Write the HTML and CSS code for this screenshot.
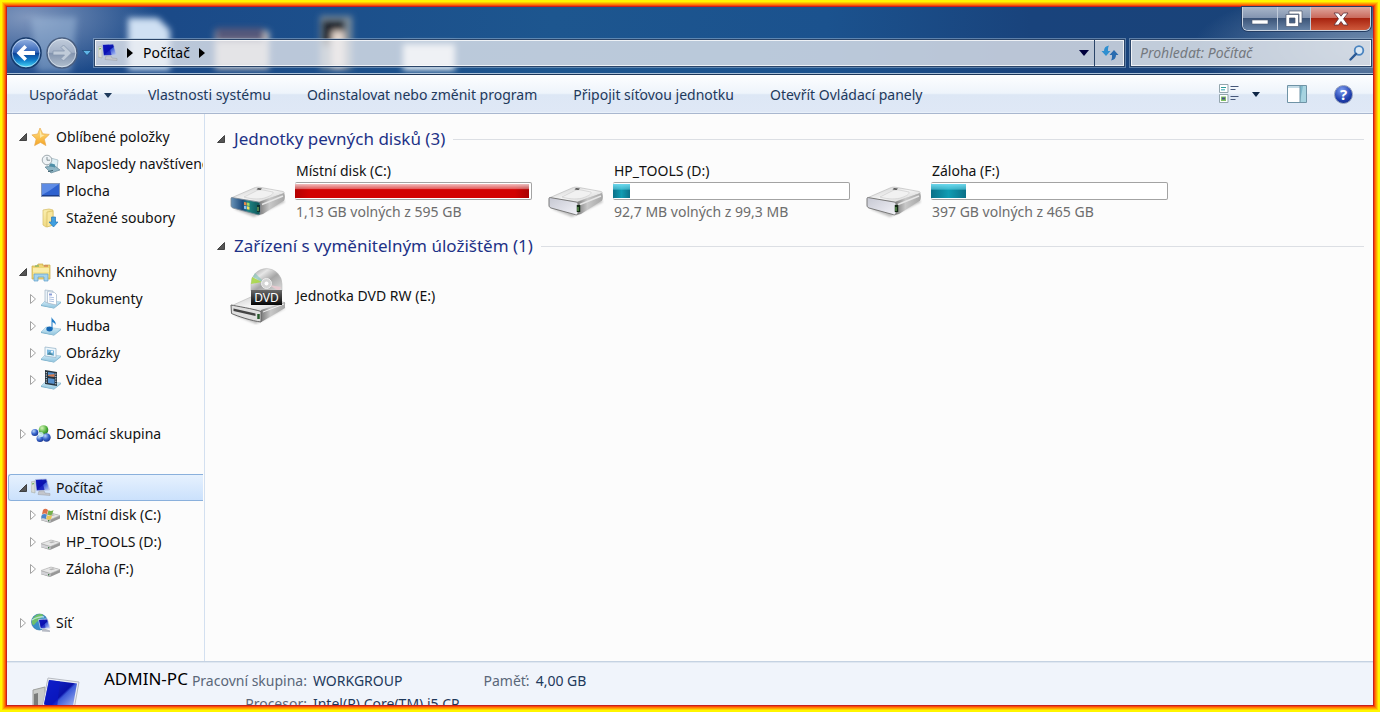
FILE: index.html
```html
<!DOCTYPE html>
<html lang="cs">
<head>
<meta charset="utf-8">
<title>Počítač</title>
<link rel="stylesheet" href="styles.css">
</head>
<body>
<svg class="defs" aria-hidden="true">
  <defs>
    <linearGradient id="gScreen" x1="0" y1="0" x2="1" y2="1"><stop offset="0" stop-color="#1a2fd0"/><stop offset=".5" stop-color="#0a12a8"/><stop offset=".55" stop-color="#3c5ad8"/><stop offset="1" stop-color="#c4d4f8"/></linearGradient>
    <linearGradient id="gBase" x1="0" y1="0" x2="0" y2="1"><stop offset="0" stop-color="#d8effa"/><stop offset="1" stop-color="#8fc4de"/></linearGradient>
    <linearGradient id="gTop" x1="0" y1="0" x2="1" y2="1"><stop offset="0" stop-color="#c9c9c9"/><stop offset=".5" stop-color="#f4f4f4"/><stop offset="1" stop-color="#cfcfcf"/></linearGradient>
    <linearGradient id="gSide" x1="0" y1="0" x2="1" y2="0"><stop offset="0" stop-color="#7a7a7a"/><stop offset=".4" stop-color="#c8c8c8"/><stop offset="1" stop-color="#a6a6a6"/></linearGradient>
    <linearGradient id="gFront" x1="0" y1="0" x2="1" y2="1"><stop offset="0" stop-color="#c6c8d2"/><stop offset="1" stop-color="#f2f2f8"/></linearGradient>
    <linearGradient id="gFrontC" x1="0" y1="0" x2="1" y2="0"><stop offset="0" stop-color="#6a94b8"/><stop offset=".4" stop-color="#1c4a7c"/><stop offset=".6" stop-color="#1f8484"/><stop offset="1" stop-color="#0b5356"/></linearGradient>
    <linearGradient id="gStar" x1="0" y1="0" x2="0" y2="1"><stop offset="0" stop-color="#ffe58a"/><stop offset="1" stop-color="#f5a423"/></linearGradient>
    <linearGradient id="gFolder" x1="0" y1="0" x2="1" y2="1"><stop offset="0" stop-color="#fdf3b8"/><stop offset="1" stop-color="#e6c860"/></linearGradient>
    <linearGradient id="gDisc" x1="0" y1="0" x2="1" y2="1"><stop offset="0" stop-color="#8f8f8f"/><stop offset=".3" stop-color="#e6e6e6"/><stop offset=".55" stop-color="#a6a6a6"/><stop offset="1" stop-color="#dedede"/></linearGradient>
    <linearGradient id="gTag" x1="0" y1="0" x2="0" y2="1"><stop offset="0" stop-color="#6a6a6a"/><stop offset="1" stop-color="#050505"/></linearGradient>
    <linearGradient id="gBack" x1="0" y1="0" x2="0" y2="1"><stop offset="0" stop-color="#9db8e4"/><stop offset=".48" stop-color="#2f62b8"/><stop offset=".5" stop-color="#0c3f96"/><stop offset=".75" stop-color="#1180cc"/><stop offset="1" stop-color="#4fe0fa"/></linearGradient>
    <linearGradient id="gFwd" x1="0" y1="0" x2="0" y2="1"><stop offset="0" stop-color="#c3cedd"/><stop offset=".48" stop-color="#a2b0c6"/><stop offset=".5" stop-color="#8293ae"/><stop offset="1" stop-color="#b4c2d0"/></linearGradient>
    <radialGradient id="gBall" cx=".35" cy=".3" r=".8"><stop offset="0" stop-color="#b9d4fa"/><stop offset=".5" stop-color="#3a68cc"/><stop offset="1" stop-color="#122c86"/></radialGradient>
    <radialGradient id="gGreen" cx=".35" cy=".3" r=".8"><stop offset="0" stop-color="#d6f6b8"/><stop offset=".6" stop-color="#4fae3a"/><stop offset="1" stop-color="#1f6d22"/></radialGradient>
    <filter id="soft" x="-30%" y="-30%" width="160%" height="160%"><feGaussianBlur stdDeviation="1.2"/></filter>
    <filter id="glass" x="-30%" y="-30%" width="160%" height="160%"><feGaussianBlur stdDeviation="3"/></filter>

    <symbol id="open" viewBox="0 0 10 10"><path d="M8.500 1.500v7h-7z" fill="#555" stroke="#2a2a2a" stroke-width=".8"/></symbol>
    <symbol id="closed" viewBox="0 0 10 10"><path d="M2.500.500v9l5-4.500z" fill="#fff" stroke="#a2a2a2"/></symbol>

    <symbol id="star" viewBox="0 0 20 20"><path d="M9 1l2.800 5.800 6.500.6-5 4.800 1.600 6.400-5.400-3.200-5.900 3.200 1.600-6.600L.900 7.900l5.800-.9z" fill="url(#gStar)" stroke="#e8a94f" stroke-width=".7"/><path d="M9 3l1.600 4.800 3 .3-4.600 3z" fill="#fff5c4" opacity=".7"/></symbol>
    <symbol id="recent" viewBox="0 0 20 20"><path d="M6 3l11 3-1 9-10-2z" fill="#dff0f6" stroke="#9bb2bc" stroke-width=".7"/><path d="M4 13l10-1 5 4-9 3z" fill="#8fb6c6" stroke="#54788a" stroke-width=".6"/><path d="M9 9l5 1.500v3L8 12z" fill="#4e8fa8"/><circle cx="6" cy="6" r="4.800" fill="#eef3f6" stroke="#a0aab0"/><path d="M6 3v3.200h3" fill="none" stroke="#6b7880" stroke-width=".8"/><path d="M7 17.500l5-1" stroke="#385a68"/></symbol>
    <symbol id="desktop" viewBox="0 0 20 20"><rect x=".500" y="2.500" width="18" height="13" fill="#2e62cf" stroke="#8698b8"/><path d="M1 3h17L8 10l-7 4z" fill="#6f9bec" opacity=".75"/><path d="M1 14.500h17" stroke="#1b3d8c"/></symbol>
    <symbol id="downloads" viewBox="0 0 20 20"><path d="M2 2l6-1 4 1v15l-7 2-3-2z" fill="url(#gFolder)" stroke="#d6bb62" stroke-width=".7"/><path d="M6 4l6-1v14l-6 2z" fill="#f8e69c" stroke="#d6bb62" stroke-width=".7"/><path d="M10.500 9h4v5h2.500l-4.500 5-4.500-5h2.500z" fill="#3f9fe0" stroke="#2a76b8" stroke-width=".7"/></symbol>
    <symbol id="libraries" viewBox="0 0 20 20"><path d="M1 4h5l1-2h5v2l2-1h5v14H1z" fill="#efd676" stroke="#c9ab49" stroke-width=".7"/><path d="M2 6h16v9H2z" fill="#f6e48f"/><path d="M2 7h16M2 9h16" stroke="#fdf5c4"/><path d="M4 4h4" stroke="#69a85a"/><path d="M13 4h4" stroke="#c8604a"/><path d="M3 19v-7h14v7h-4v-4H7v4z" fill="#a5d3ec" stroke="#5f9fca" stroke-width=".7"/></symbol>
    <symbol id="base" viewBox="0 0 20 20"><path d="M5 11l-5 5 13 3 7-6z" fill="url(#gBase)" stroke="#98c2d6" stroke-width=".6"/><path d="M0 16l13 3 7-6v1l-7 5.500L0 17z" fill="#74aecb"/></symbol>
    <symbol id="documents" viewBox="0 0 20 20"><use href="#base"/><path d="M4 1l8 1v13l-8-2z" fill="#e9f1f8" stroke="#a2b4c6" stroke-width=".7"/><path d="M6.500 2.500l7 1 2 2V16l-9-2z" fill="#fff" stroke="#a2b4c6" stroke-width=".7"/><path d="M8 8l5 .7M8 10l5 .7M8 12l5 .7" stroke="#9db4da" stroke-width=".8"/><path d="M8 4.500h3v2H8z" fill="#8b9dd6"/></symbol>
    <symbol id="music" viewBox="0 0 20 20"><use href="#base"/><ellipse cx="8.500" cy="13" rx="3.200" ry="2.400" fill="#1768b4"/><path d="M10.500 13V1c1 3 5 4 4 8-.5-2-2-2.500-3-3v7z" fill="#1f7cc8"/></symbol>
    <symbol id="pictures" viewBox="0 0 20 20"><use href="#base"/><path d="M4 4l11 1.500v9L4 13z" fill="#eef7fc" stroke="#9bb8cb" stroke-width=".8"/><path d="M6 6.500l7 1v5l-7-1z" fill="#7ab8e0"/><path d="M6 11.500l2.500-2.500 4.500 3.500z" fill="#4f8aa0"/><circle cx="11" cy="8.800" r="1" fill="#fff"/></symbol>
    <symbol id="videos" viewBox="0 0 20 20"><use href="#base"/><path d="M4 0l12 2v14L4 14z" fill="#27343f"/><path d="M7 2l6.500 1v4L7 6zM7 8l6.500 1v5L7 13z" fill="#5690cc"/><path d="M7 5l6.500-1v3L7 6z" fill="#d4794b"/><path d="M5.300 2v11M14.800 3.500v11" stroke="#dbe4ea" stroke-dasharray="1.200 1.200"/></symbol>
    <symbol id="homegroup" viewBox="0 0 20 20"><circle cx="12.500" cy="6" r="4.800" fill="url(#gGreen)"/><circle cx="3.800" cy="8.500" r="3.500" fill="url(#gBall)"/><circle cx="9" cy="14.500" r="3.500" fill="url(#gBall)"/><circle cx="15.500" cy="13.500" r="4.200" fill="url(#gBall)"/><circle cx="10" cy="10.500" r="2.600" fill="#c9eef4" opacity=".85"/></symbol>
    <symbol id="computer" viewBox="0 0 20 20"><path d="M0 4l4-1v12l-4-1z" fill="#d8dbd8" stroke="#a8aca8" stroke-width=".6"/><path d="M1 6l2-.4" stroke="#5fae4c"/><path d="M4.500 1.500l11-.5 3 11-13 .500z" fill="url(#gScreen)" stroke="#b9c4e0" stroke-width=".8"/><path d="M5 2l6-.3L13.500 12l-7.500.2z" fill="#0b0fb6" opacity=".75"/><path d="M8 13l5-.2 1 2.200 5 .5v2l-12-1z" fill="#c3c6cc" stroke="#9a9ea6" stroke-width=".5"/></symbol>
    <symbol id="drive" viewBox="0 0 20 20"><path d="M0 12l10-4 9 2.500v3L9 18 0 15.200z" fill="#979797"/><path d="M0 11.500L10 8l9 2.500L9.500 14.500z" fill="#e6e6e6" stroke="#b0b0b0" stroke-width=".6"/><path d="M0 12l9.500 3v2.500L0 15z" fill="#d2d2d6"/><path d="M7.700 15v1.600" stroke="#2e6a35" stroke-width="1.200"/><path d="M8 10l4-.8 2 1-4 1z" fill="#b4b4b4"/></symbol>
    <symbol id="drivewin" viewBox="0 0 20 20"><use href="#drive"/><path d="M2 5c2-2 3.500-1 5 0L6 9.200C5 8.300 3 8 1 9.200z" fill="#dd7048"/><path d="M7.500 5.300c2 1 3.500.8 5-.3l-1.300 4.500C9.500 10.500 8 10.300 6.300 9.500z" fill="#74b04c"/><path d="M.800 9.800c2-1.300 3.800-.8 5 0L4.800 14c-1.300-.8-2.800-1-4.500-.3z" fill="#4a86cf"/><path d="M6.200 10.200c1.500.8 3.300 1 4.900 0l-1 3.800c-1.800 1-3.500.8-4.900 0z" fill="#e8c65a"/></symbol>
    <symbol id="network" viewBox="0 0 20 20"><circle cx="8.500" cy="9" r="8" fill="#3b8fc8" stroke="#2c6fa2" stroke-width=".6"/><path d="M3 4c4-4 8-3 9-2 0 3-4 3-5 6-2 1-4 5-5 4-2-3-1-6 1-8z" fill="#6fc069"/><path d="M1 7c3-2 9-4 12-3" stroke="#d3f0fa" fill="none" stroke-width="1.500" opacity=".7"/><path d="M7.500 6.500l9-.5 2.500 9-9.500.500z" fill="url(#gScreen)" stroke="#ccd6ee" stroke-width=".8"/><path d="M8 7l5-.3 1.500 8-4.500.3z" fill="#0b0fb6" opacity=".6"/><path d="M11 16l3-.2 5 1.700v1.500l-8-.5z" fill="#b6bac4"/></symbol>

    <symbol id="hdd" viewBox="0 0 56 34"><path d="M4 24l20 8 31-15-3-4z" fill="#777" opacity=".45" filter="url(#soft)"/><path d="M1 13L24 3c2-1 4-1 6-.7L53 6.500c1.500.5 1.500 1.500.500 2.300L29 17z" fill="url(#gTop)" stroke="#b5b5b5" stroke-width=".6"/><path d="M14 12l13-6.500c2-.8 4-.8 6-.5l10 2c1 2-3 4-7 5.500-5 2-14 2-22-.500z" fill="#f1f1f1" stroke="#cfcfcf" stroke-width=".7"/><path d="M28 3l4 .5-1.500 1.500-4-.5z" fill="#555"/><path d="M29 17L54 8c1 1 1.300 6 0 7.500L33 29l-4 1z" fill="url(#gSide)"/><path d="M32 19.500L53 11" stroke="#e6e6e6" stroke-width="1.500"/></symbol>
    <symbol id="dvd" viewBox="0 0 56 58"><path d="M4 48l22 9 30-16z" fill="#777" opacity=".45" filter="url(#soft)"/><path d="M1 39l22-10h14l17 6.500c1 .5 1 1.500 0 2L31 44z" fill="url(#gTop)" stroke="#b5b5b5" stroke-width=".6"/><path d="M31 43l24-8v6L33 54l-2 1z" fill="url(#gSide)"/><path d="M33 45l21-8" stroke="#f0f0f0"/><path d="M21 24V17a15.500 15.500 0 0 1 31 0v7z" fill="url(#gDisc)" stroke="#bcbcbc" stroke-width=".6"/><path d="M22 10l10 5-11 2z" fill="#a6d83e" opacity=".85"/><path d="M25 6l8 8-1 1-9-5z" fill="#7fc3b6" opacity=".6"/><path d="M39 18l12 2-2 4z" fill="#e6c9cf"/><circle cx="36.500" cy="16.500" r="5" fill="#d5d5d5" stroke="#eee"/><circle cx="36.500" cy="16.500" r="2" fill="#fff"/><path d="M21 23h31v15H21z" fill="url(#gTag)"/><text x="36.500" y="34.500" text-anchor="middle" class="dvd-label">DVD</text><path d="M1 38c5 1 23 4 30 6.500V55C22 54 7 49 1.500 46.500z" fill="#dfdfdf" stroke="#666" stroke-width="1"/><path d="M3.500 41.500l22 5v2.500l-22-5z" fill="#444"/><path d="M28.500 47v5" stroke="#285a2c" stroke-width="2.500"/></symbol>
  </defs>
</svg>

<div class="frame">
  <header class="titlebar">
    <svg class="backdrop" viewBox="0 0 480 67" aria-hidden="true">
      <g filter="url(#glass)">
        <path d="M24 10h46l-6 55H30z" fill="#a9c4e0" opacity=".45"/>
        <path d="M121 11h30l12 12v40h-42z" fill="#cfe0f3"/>
        <path d="M208 24h54v38h-54z" fill="#c9c4c4"/><path d="M209 21h48v14h-48z" fill="#56587a"/>
        <path d="M313 9h32v53h-32z" fill="#7f8f9c"/><path d="M315 13h23v26h-23z" fill="#151c26"/>
        <path d="M325 24h12v38h-12z" fill="#e5d7cd"/>
        <path d="M396 37h52v26h-52z" fill="#f6fafd"/>
      </g>
    </svg>
    <div class="controls">
      <button class="control" aria-label="Minimalizovat"><svg width="18" height="14" viewBox="0 0 18 14"><path d="M1 8h16v4H1z" fill="#fff" stroke="#4a586e" stroke-width=".6"/></svg></button>
      <button class="control" aria-label="Obnovit"><svg width="18" height="18" viewBox="0 0 18 18"><path d="M4 1h13v12h-3V4H4z" fill="#fff" stroke="#4a586e" stroke-width=".7"/><path d="M1 4.500h12.500v12H1zM4.500 8v5H10V8z" fill="#fff" fill-rule="evenodd" stroke="#4a586e" stroke-width=".7"/></svg></button>
      <button class="control control-close" aria-label="Zavřít"><svg width="16" height="14" viewBox="0 0 16 14"><path d="M1 1h4.500L8 4.200 10.500 1H15l-4.500 5.800L15 13h-4.500L8 9.500 5.500 13H1l4.500-6.200z" fill="#fff" stroke="#5c3038" stroke-width=".8"/></svg></button>
    </div>
    <div class="navrow">
      <div class="travel">
        <button class="round" aria-label="Zpět"><svg width="32" height="32" viewBox="0 0 32 32"><circle cx="16" cy="16" r="15" fill="url(#gBack)" stroke="#173a6b" stroke-width="1.500"/><circle cx="16" cy="16" r="13.800" fill="none" stroke="#dcecfb" stroke-opacity=".65"/><path d="M6.500 16l8-8 2.500 2.500-3.500 3.500H25v4H13.500l3.500 3.500-2.500 2.500z" fill="#fff"/></svg></button>
        <button class="round" aria-label="Vpřed"><svg width="32" height="32" viewBox="0 0 32 32"><circle cx="16" cy="16" r="15" fill="url(#gFwd)" stroke="#4a5f80" stroke-width="1.500"/><circle cx="16" cy="16" r="13.800" fill="none" stroke="#e3ebf3" stroke-opacity=".7"/><path d="M25.500 16l-8-8-2.500 2.500 3.500 3.500H7v4h11.500L15 21.500l2.500 2.500z" fill="#c0cbd9" stroke="#8797ae" stroke-width=".8"/></svg></button>
        <button class="history" aria-label="Poslední stránky"><svg width="10" height="6" viewBox="0 0 10 6"><path d="M.500.500h9L5 5.500z" fill="#5fb4e6" stroke="#123a66" stroke-width=".6"/></svg></button>
      </div>
      <nav class="address" aria-label="Adresa">
        <svg class="icon" aria-hidden="true"><use href="#computer"/></svg>
        <button class="crumb-arrow" aria-label="Kořen"><svg width="6" height="10" viewBox="0 0 6 10"><path d="M0 0l6 5-6 5z"/></svg></button>
        <a class="crumb" href="#">Počítač</a>
        <button class="crumb-arrow" aria-label="Podsložky"><svg width="6" height="10" viewBox="0 0 6 10"><path d="M0 0l6 5-6 5z"/></svg></button>
        <button class="address-drop" aria-label="Předchozí umístění"><svg width="10" height="6" viewBox="0 0 10 6"><path d="M0 0h10L5 6z" fill="#00003c"/></svg></button>
        <button class="refresh" aria-label="Aktualizovat"><svg width="18" height="16" viewBox="0 0 18 16"><path d="M8 .500C4.500 1 3 3 3 6H.500L5 11l4.500-5H7c0-2.500 0-4 1-5.500z" fill="#2f8fd0"/><path d="M10 15.500c3.500-.5 5-2.500 5-5.500h2.500L13 5l-4.500 5H11c0 2.500 0 4-1 5.500z" fill="#2a6cb0"/></svg></button>
      </nav>
      <label class="search">
        <input type="search" placeholder="Prohledat: Počítač" aria-label="Prohledat: Počítač">
        <svg width="16" height="16" viewBox="0 0 16 16" aria-hidden="true"><circle cx="10" cy="5.500" r="4.300" fill="#dbe8f4" stroke="#4a84c0" stroke-width="1.800"/><path d="M7 8.800L1.500 14.500" stroke="#2b5a96" stroke-width="2.400" stroke-linecap="round"/></svg>
      </label>
    </div>
  </header>

  <div class="toolbar" role="toolbar">
    <button class="command">Uspořádat <svg width="8" height="5" viewBox="0 0 8 5"><path d="M0 0h8L4 5z" fill="#1e395b"/></svg></button>
    <button class="command">Vlastnosti systému</button>
    <button class="command">Odinstalovat nebo změnit program</button>
    <button class="command">Připojit síťovou jednotku</button>
    <button class="command">Otevřít Ovládací panely</button>
    <div class="toolbar-end">
      <button class="tool view" aria-label="Změnit zobrazení"><svg width="20" height="20" viewBox="0 0 20 20"><path d="M.500.500h8.500v8H.500zM.500 10.500h8.500v8H.500z" fill="#fff" stroke="#93a5ad"/><path d="M2 3h5v1H2z" fill="#2f9c9a"/><path d="M2 5h4v1.500H2z" fill="#74bfc8"/><path d="M2 12.500h5V17H2z" fill="#7fbf63"/><path d="M3 13.500h3v2H3z" fill="#4a4e8c"/><path d="M11.500 2.500h8M11.500 5.500h5M11.500 12.500h8M11.500 15.500h5" stroke="#46587a"/></svg><svg width="8" height="5" viewBox="0 0 8 5"><path d="M0 0h8L4 5z" fill="#0e2646"/></svg></button>
      <button class="tool" aria-label="Podokno náhledu"><svg width="20" height="18" viewBox="0 0 20 18"><path d="M.500.500h19v17H.500z" fill="#fff" stroke="#6f93a6"/><path d="M1 1h12v2H1z" fill="#c3dbe6"/><path d="M13 1h6v16h-6z" fill="#7db8cc"/><path d="M16 1h3v16h-6z" fill="#a6d3e0"/><path d="M13 1v16" stroke="#6f93a6"/></svg></button>
      <button class="tool help" aria-label="Nápověda"><span>?</span></button>
    </div>
  </div>

  <div class="body">
    <nav class="tree" aria-label="Navigační podokno">
      <ul>
        <li><a class="node" href="#"><svg class="twist"><use href="#open"/></svg><svg class="icon"><use href="#star"/></svg>Oblíbené položky</a>
          <ul>
            <li><a class="node" href="#"><i class="twist"></i><svg class="icon"><use href="#recent"/></svg>Naposledy navštívené</a></li>
            <li><a class="node" href="#"><i class="twist"></i><svg class="icon"><use href="#desktop"/></svg>Plocha</a></li>
            <li><a class="node" href="#"><i class="twist"></i><svg class="icon"><use href="#downloads"/></svg>Stažené soubory</a></li>
          </ul>
        </li>
        <li><a class="node" href="#"><svg class="twist"><use href="#open"/></svg><svg class="icon"><use href="#libraries"/></svg>Knihovny</a>
          <ul>
            <li><a class="node" href="#"><svg class="twist"><use href="#closed"/></svg><svg class="icon"><use href="#documents"/></svg>Dokumenty</a></li>
            <li><a class="node" href="#"><svg class="twist"><use href="#closed"/></svg><svg class="icon"><use href="#music"/></svg>Hudba</a></li>
            <li><a class="node" href="#"><svg class="twist"><use href="#closed"/></svg><svg class="icon"><use href="#pictures"/></svg>Obrázky</a></li>
            <li><a class="node" href="#"><svg class="twist"><use href="#closed"/></svg><svg class="icon"><use href="#videos"/></svg>Videa</a></li>
          </ul>
        </li>
        <li><a class="node" href="#"><svg class="twist"><use href="#closed"/></svg><svg class="icon"><use href="#homegroup"/></svg>Domácí skupina</a></li>
        <li><a class="node selected" href="#" aria-current="true"><svg class="twist"><use href="#open"/></svg><svg class="icon"><use href="#computer"/></svg>Počítač</a>
          <ul>
            <li><a class="node" href="#"><svg class="twist"><use href="#closed"/></svg><svg class="icon"><use href="#drivewin"/></svg>Místní disk (C:)</a></li>
            <li><a class="node" href="#"><svg class="twist"><use href="#closed"/></svg><svg class="icon"><use href="#drive"/></svg>HP_TOOLS (D:)</a></li>
            <li><a class="node" href="#"><svg class="twist"><use href="#closed"/></svg><svg class="icon"><use href="#drive"/></svg>Záloha (F:)</a></li>
          </ul>
        </li>
        <li><a class="node" href="#"><svg class="twist"><use href="#closed"/></svg><svg class="icon"><use href="#network"/></svg>Síť</a></li>
      </ul>
    </nav>

    <main class="content">
      <section>
        <h2 class="group"><svg class="twist"><use href="#open"/></svg>Jednotky pevných disků (3)</h2>
        <div class="tiles">
          <a class="tile" href="#">
            <svg class="drive-icon" viewBox="0 0 56 34"><use href="#hdd"/><path d="M1 13.500c0-1 1-1 2-.8L28 17c1.500.3 2 1 2 2v9c0 2-1 2-2.500 1.700L3 23c-1.500-.5-2-1.500-2-3z" fill="url(#gFrontC)" stroke="#7b8894" stroke-width=".8"/><path d="M14 17l2.500.5v3L14 20z" fill="#e88a4a"/><path d="M17 17.600l2.500.5v3l-2.500-.5z" fill="#a8d860"/><path d="M14 20.700l2.500.5v3l-2.500-.5z" fill="#8cc0f0"/><path d="M17 21.300l2.500.5v3l-2.500-.5z" fill="#f2e060"/><path d="M28.500 20v7" stroke="#133" stroke-width="3"/><path d="M28 22v4" stroke="#8fd06a"/></svg>
            <span class="info"><span class="name">Místní disk (C:)</span><span class="bar" role="meter" aria-label="Obsazeno" aria-valuenow="99"><span class="fill full" style="width:99%"></span></span><span class="free">1,13 GB volných z 595 GB</span></span>
          </a>
          <a class="tile" href="#">
            <svg class="drive-icon" viewBox="0 0 56 34"><use href="#hdd"/><path d="M1 13.500c0-1 1-1 2-.8L28 17c1.500.3 2 1 2 2v9c0 2-1 2-2.500 1.700L3 23c-1.500-.5-2-1.500-2-3z" fill="url(#gFront)" stroke="#7a7a7a"/><path d="M30.500 20v7" stroke="#122814" stroke-width="3.500"/><path d="M30 22v4" stroke="#7ec46a"/></svg>
            <span class="info"><span class="name">HP_TOOLS (D:)</span><span class="bar" role="meter" aria-label="Obsazeno" aria-valuenow="7"><span class="fill" style="width:7%"></span></span><span class="free">92,7 MB volných z 99,3 MB</span></span>
          </a>
          <a class="tile" href="#">
            <svg class="drive-icon" viewBox="0 0 56 34"><use href="#hdd"/><path d="M1 13.500c0-1 1-1 2-.8L28 17c1.500.3 2 1 2 2v9c0 2-1 2-2.500 1.700L3 23c-1.500-.5-2-1.500-2-3z" fill="url(#gFront)" stroke="#7a7a7a"/><path d="M30.500 20v7" stroke="#122814" stroke-width="3.500"/><path d="M30 22v4" stroke="#7ec46a"/></svg>
            <span class="info"><span class="name">Záloha (F:)</span><span class="bar" role="meter" aria-label="Obsazeno" aria-valuenow="15"><span class="fill" style="width:15%"></span></span><span class="free">397 GB volných z 465 GB</span></span>
          </a>
        </div>
      </section>
      <section>
        <h2 class="group"><svg class="twist"><use href="#open"/></svg>Zařízení s vyměnitelným úložištěm (1)</h2>
        <div class="tiles">
          <a class="tile tile-plain" href="#">
            <svg class="dvd-icon"><use href="#dvd"/></svg>
            <span class="name">Jednotka DVD RW (E:)</span>
          </a>
        </div>
      </section>
    </main>
  </div>

  <footer class="details">
    <svg class="pc" viewBox="0 0 54 48" aria-hidden="true"><path d="M4 13l12-3v37H4z" fill="#c9cbc8" stroke="#9fa19e"/><path d="M5 17l4-1v30H5z" fill="#7a7c7a"/><path d="M19 1l31 4-6 33-31-8z" fill="#eceef2" stroke="#b8bcc4"/><path d="M20 3l28 3.500-5 28-28-7z" fill="url(#gScreen)"/><path d="M20 3l11 1.500L28 31l-13-4z" fill="#0a18c8" opacity=".7"/></svg>
    <div class="pcname">ADMIN-PC</div>
    <dl class="facts">
      <dt>Pracovní skupina:</dt><dd>WORKGROUP</dd>
      <dt>Procesor:</dt><dd>Intel(R) Core(TM) i5 CP</dd>
    </dl>
    <dl class="facts memory">
      <dt>Paměť:</dt><dd>4,00 GB</dd>
    </dl>
  </footer>
</div>
</body>
</html>
```
FILE: styles.css
```css
* { box-sizing: border-box; }
body {
  margin: 0;
  font: 14px/20px "Noto Sans", "Open Sans", sans-serif;
  color: #111;
}
button { margin: 0; padding: 0; border: 0; background: none; font: inherit; color: inherit; }
a { color: inherit; text-decoration: none; }
ul { margin: 0; padding: 0; list-style: none; }
svg { display: block; flex: none; }
.defs { position: absolute; width: 0; height: 0; }
.icon { width: 20px; height: 20px; flex: none; }
.twist { width: 10px; height: 10px; flex: none; }

.frame {
  height: 100vh;
  padding: 7px;
  display: flex;
  flex-direction: column;
  overflow: hidden;
  box-shadow:
    inset 0 0 0 2px #fff600,
    inset 0 0 0 3px #ffd000,
    inset 0 0 0 4px #ffa400,
    inset 0 0 0 5px #ff7c00,
    inset 0 0 0 6px #f84a08,
    inset 0 0 0 7px #c8201c;
}

/* title bar */
.titlebar {
  position: relative;
  flex: none;
  display: flex;
  flex-direction: column;
  background:
    radial-gradient(ellipse 130px 60px at 20px 10px, rgba(160, 176, 206, .75), transparent),
    radial-gradient(ellipse 180px 60px at 100% 60%, rgba(150, 170, 196, .75), transparent),
    linear-gradient(90deg, #1e4a8a 0, #1b4a88 12%, #1d568f 40%, #1b528e 60%, #19437c 75%, #1a4377 100%);
  border-bottom: 1px solid #1b3558;
  box-shadow: inset 0 -1px 0 #a9c0d8;
}
.backdrop { position: absolute; left: 0; top: 0; width: 480px; height: 67px; }
.controls {
  position: relative;
  align-self: flex-end;
  display: flex;
  margin-right: 2px;
  height: 24px;
  border: 1px solid #c9d3e0;
  border-top: 0;
  border-radius: 0 0 6px 6px;
  overflow: hidden;
  box-shadow: 0 0 0 1px #243d63;
}
.control {
  width: 35px;
  display: flex;
  align-items: center;
  justify-content: center;
  background: linear-gradient(#a9b6c9 0, #8294b0 48%, #3c5579 50%, #6682a5 100%);
  border-right: 1px solid #c0cbda;
}
.control + .control { width: 33px; }
.control + .control-close {
  width: 59px;
  border-right: 0;
  background: linear-gradient(#dfa79f 0, #c9695b 48%, #a82410 50%, #cf5a3c 100%);
}
.navrow { position: relative; display: flex; align-items: center; padding: 6px 1px 5px 3px; }
.travel {
  display: flex;
  align-items: center;
  gap: 4px;
  width: 84px;
}
.round { border-radius: 50%; }
.history { width: 10px; }
.address, .search {
  display: flex;
  align-items: center;
  height: 28px;
  border: 1px solid #2a4468;
  box-shadow: inset 0 0 0 1px rgba(255, 255, 255, .75), 0 0 0 1px rgba(160, 185, 212, .5);
}
.address { flex: 1; background: rgba(236, 238, 242, .76); padding-left: 3px; color: #000; }
.crumb-arrow { margin: 0 10px 0 9px; }
.address-drop { margin-left: auto; padding: 0 5px; }
.refresh {
  align-self: stretch;
  display: flex;
  align-items: center;
  justify-content: center;
  width: 30px;
  border-left: 1px solid #2a4468;
}
.search { width: 242px; margin-left: 5px; padding: 0 6px 0 9px; background: rgba(230, 234, 239, .82); }
.search input {
  flex: 1;
  min-width: 0;
  padding: 0;
  border: 0;
  outline: 0;
  background: none;
  font: italic 14px/20px "Noto Sans", "Open Sans", sans-serif;
}
.search input::placeholder { color: #74797f; opacity: 1; }

/* command bar */
.toolbar {
  flex: none;
  display: flex;
  align-items: center;
  gap: 36px;
  height: 39px;
  padding: 0 20px 0 22px;
  color: #1e395b;
  background: linear-gradient(#fdfeff 0, #eef4fb 48%, #dde7f5 52%, #dfe8f6 100%);
  border-bottom: 1px solid #a9b7cf;
  box-shadow: inset 0 -1px 0 #e8f0fa;
}
.command { display: flex; align-items: center; gap: 6px; padding-top: 2px; white-space: nowrap; }
.toolbar-end { margin-left: auto; display: flex; align-items: center; gap: 27px; }
.tool { display: flex; align-items: center; gap: 13px; }
.help {
  width: 19px;
  height: 19px;
  justify-content: center;
  border-radius: 50%;
  border: 1px solid #8b98b8;
  background: radial-gradient(circle at 40% 25%, #7c9cf0, #1f3fae 60%, #142a80);
  color: #fff;
  font-size: 15px;
  font-weight: 700;
}

/* panes */
.body { flex: 1; min-height: 0; display: flex; background: #fcfcfc; }
.tree {
  flex: none;
  width: 198px;
  padding: 9px 1px 0 1px;
  border-right: 1px solid #d3e0f0;
}
.tree > ul { display: grid; grid-template-columns: minmax(0, 1fr); gap: 27px; }
.node {
  display: flex;
  align-items: center;
  height: 27px;
  padding-left: 9px;
  overflow: hidden;
  white-space: nowrap;
  border: 1px solid transparent;
  border-right: 0;
}
.node .icon { margin: 0 5px 0 3px; }
.tree ul ul .node { padding-left: 19px; }
.tree .selected {
  border-color: #8ab0dc;
  border-radius: 3px 0 0 3px;
  background: linear-gradient(#e6f1fe, #cbe1fc);
}
.content { flex: 1; min-width: 0; padding: 9px 9px 0 11px; }
.group {
  display: flex;
  align-items: center;
  gap: 8px;
  height: 32px;
  margin: 0;
  font-size: 17px;
  font-weight: 400;
  color: #1e3287;
  white-space: nowrap;
}
.group::after { content: ""; flex: 1; height: 1px; background: #dcdfe4; }
.tiles { display: flex; flex-wrap: wrap; padding-left: 14px; }
.tile {
  display: flex;
  align-items: flex-end;
  gap: 9px;
  width: 318px;
  height: 75px;
  padding-bottom: 9px;
}
.drive-icon { width: 56px; height: 34px; margin-bottom: 2px; }
.dvd-icon { width: 56px; height: 58px; }
.tile-plain { align-items: center; gap: 10px; padding-bottom: 7px; }
.info { display: flex; flex-direction: column; flex: none; width: 237px; }
.info .name, .info .free { padding-left: 1px; }
.bar {
  flex: none;
  display: block;
  height: 18px;
  margin: 1px 0 2px;
  padding: 1px 0;
  background: #fff;
  border: 1px solid #a3a3a3;
  border-left: 0;
  border-radius: 2px;
}
.free { margin-bottom: -1px; color: #6d6d6d; }
.fill {
  display: block;
  height: 100%;
  background:
    linear-gradient(rgba(120, 225, 245, .9) 0, rgba(90, 205, 225, .6) 38%, transparent 42%),
    linear-gradient(90deg, #0b7088, #109cb2 50%, #0b7088);
}
.fill.full {
  background:
    linear-gradient(rgba(255, 255, 255, .75) 0, rgba(255, 255, 255, .35) 36%, transparent 40%),
    linear-gradient(90deg, #b40000, #d20000 6%, #d20000 94%, #a80000);
}

/* details pane */
.details {
  flex: none;
  display: flex;
  height: 44px;
  padding: 7px 0 0 22px;
  overflow: hidden;
  border-top: 1px solid #c5d2e2;
  background: #f0f4fb;
  box-shadow: inset 0 1px 0 #dfe7f1;
  color: #1e395b;
}
.pc { width: 54px; height: 48px; margin-top: 8px; }
.pcname { margin-left: 21px; font-size: 17px; color: #000; }
.facts {
  display: grid;
  grid-template-columns: max-content max-content;
  gap: 3px 6px;
  align-content: start;
  margin: 2px 0 0 4px;
}
.facts dt { text-align: right; color: #5a6779; }
.facts dd { margin: 0; }
.memory { margin-left: 24px; }
.dvd-label { font: 12px "Noto Sans", sans-serif; fill: #fff; }
```
